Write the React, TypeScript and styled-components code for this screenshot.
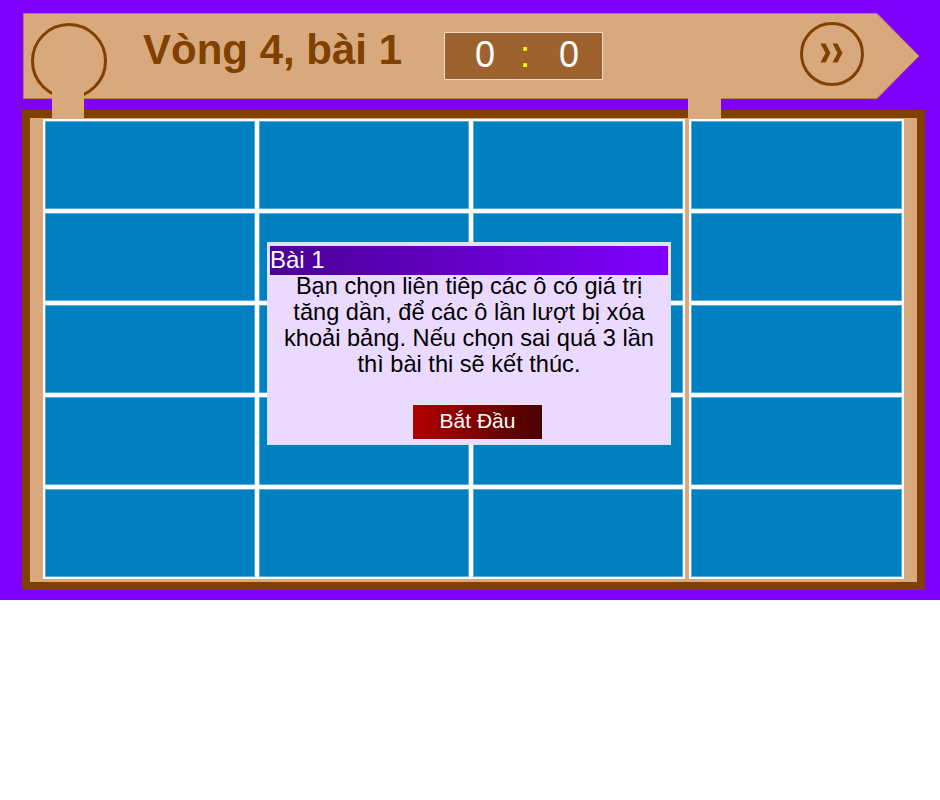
import React from "react";
import styled, { createGlobalStyle } from "styled-components";

const Global = createGlobalStyle`
  html, body { margin: 0; padding: 0; background: #ffffff; }
  body { font-family: "Liberation Sans", Arial, sans-serif; }
`;

const TAN = "#d9a97e";
const BROWN = "#804000";

const Stage = styled.div`
  width: 940px;
  height: 600px;
  background: #8000ff;
  box-sizing: border-box;
  padding: 13px 0 0 22px;
  display: flex;
  flex-direction: column;
`;

const Header = styled.header`
  position: relative;
  z-index: 2;
  margin-left: 1px;
  width: 897px;
  height: 86px;
  display: flex;
  align-items: flex-start;
`;

const HeaderShape = styled.svg`
  position: absolute;
  inset: 0;
  z-index: 0;
`;

const HomeRing = styled.div`
  position: relative;
  z-index: 1;
  margin: 10px 0 0 8px;
  width: 76px;
  height: 76px;
  box-sizing: border-box;
  border: 3px solid ${BROWN};
  border-radius: 50%;
  flex-shrink: 0;
`;

const Stem = styled.div<{ $left: number; $top: number; $w: number; $h: number }>`
  position: absolute;
  left: ${(p) => p.$left}px;
  top: ${(p) => p.$top}px;
  width: ${(p) => p.$w}px;
  height: ${(p) => p.$h}px;
  background: ${TAN};
  z-index: 3;
`;

const Title = styled.h1`
  position: relative;
  z-index: 1;
  margin: 13px 0 0 36px;
  font-family: "Liberation Sans", Arial, sans-serif;
  font-weight: bold;
  font-size: 42px;
  line-height: 48px;
  color: ${BROWN};
  white-space: nowrap;
`;

const Score = styled.div`
  position: relative;
  z-index: 1;
  margin: 19px 0 0 42px;
  width: 159px;
  height: 48px;
  box-sizing: border-box;
  border: 1px solid #ecdccb;
  background: #9d622e;
  display: flex;
  align-items: center;
  padding: 0 0 3px 30px;
  font-family: "Liberation Sans", Arial, sans-serif;
  font-size: 36px;
  line-height: 1;
`;

const ScorePart = styled.span<{ $gap: number; $colon?: boolean }>`
  margin-left: ${(p) => p.$gap}px;
  color: ${(p) => (p.$colon ? "#ffff00" : "#ffffff")};
`;

const NextButton = styled.button`
  position: relative;
  z-index: 1;
  margin: 9px 56px 0 auto;
  width: 64px;
  height: 64px;
  box-sizing: border-box;
  border: 3px solid ${BROWN};
  border-radius: 50%;
  background: transparent;
  padding: 0 0 2px 0;
  display: flex;
  align-items: center;
  justify-content: center;
  cursor: pointer;
`;

const Board = styled.main`
  position: relative;
  z-index: 1;
  margin-top: 11px;
  width: 903px;
  height: 480px;
  box-sizing: border-box;
  border: 8px solid ${BROWN};
  background: ${TAN};
  padding: 1px 13px 3px 13px;
  display: flex;
  gap: 4px;
`;

const TileGrid = styled.div<{ $cols: number; $w: number }>`
  display: grid;
  grid-template-columns: repeat(${(p) => p.$cols}, ${(p) => p.$w}px);
  grid-auto-rows: 92px;
`;

const Tile = styled.div`
  box-sizing: border-box;
  border: 2px solid #ffffff;
  background: #0080c0;
  box-shadow: inset 0 0 0 1px #58acdc;
`;

const Dialog = styled.section`
  position: absolute;
  left: 237px;
  top: 124px;
  width: 404px;
  height: 203px;
  box-sizing: border-box;
  border: 1px solid #d5e2f2;
  background: #eadaff;
  padding: 2px 1px 0 1px;
  display: flex;
  flex-direction: column;
  align-items: center;
`;

const DialogHead = styled.h2`
  position: relative;
  z-index: 1;
  align-self: stretch;
  margin: 0;
  height: 31px;
  box-sizing: border-box;
  border: 1px solid #eadaff;
  background: linear-gradient(to right, #4a0094, #8000ff);
  color: #ffffff;
  font-family: "Liberation Sans", Arial, sans-serif;
  font-weight: normal;
  font-size: 24px;
  line-height: 28px;
  padding: 0;
`;

const DialogText = styled.p`
  margin: -3px 0 0 0;
  padding: 0 8px;
  text-align: center;
  color: #000000;
  font-family: "Liberation Sans", Arial, sans-serif;
  font-size: 23.6px;
  line-height: 26px;
`;

const StartButton = styled.button`
  margin: 27px 0 0 17px;
  width: 131px;
  height: 36px;
  box-sizing: border-box;
  border: 1px solid #f4e6f4;
  background: linear-gradient(to right, #b00000, #4a0000);
  color: #ffffff;
  font-family: "Liberation Sans", Arial, sans-serif;
  font-size: 21px;
  padding: 0 0 3px 0;
  cursor: pointer;
`;

export default function App() {
  const left = Array.from({ length: 15 });
  const right = Array.from({ length: 5 });
  return (
    <>
      <Global />
      <Stage>
        <Header>
          <HeaderShape width="897" height="86" viewBox="0 0 897 86">
            <polygon
              points="0.5,0.5 854,0.5 896,43 854,85.5 0.5,85.5"
              fill={TAN}
              stroke="#b0804e"
              strokeWidth="1"
            />
          </HeaderShape>
          <HomeRing>
            <Stem $left={18} $top={63} $w={32} $h={30} />
          </HomeRing>
          <Title>Vòng 4, bài 1</Title>
          <Score>
            <ScorePart $gap={0}>0</ScorePart>
            <ScorePart $gap={25} $colon>:</ScorePart>
            <ScorePart $gap={29}>0</ScorePart>
          </Score>
          <NextButton aria-label="next">
            <svg width="24" height="20" viewBox="0 0 24 20">
              <path d="M0.5 0.5 H5.5 L10.5 10 L5.5 19.5 H0.5 L5.5 10 Z" fill={BROWN} />
              <path d="M12.5 0.5 H17.5 L22.5 10 L17.5 19.5 H12.5 L17.5 10 Z" fill={BROWN} />
            </svg>
          </NextButton>
          <Stem $left={665} $top={85} $w={33} $h={20} />
        </Header>
        <Board>
          <TileGrid $cols={3} $w={214}>
            {left.map((_, i) => (
              <Tile key={i} />
            ))}
          </TileGrid>
          <TileGrid $cols={1} $w={215}>
            {right.map((_, i) => (
              <Tile key={i} />
            ))}
          </TileGrid>
          <Dialog>
            <DialogHead>Bài 1</DialogHead>
            <DialogText>
              Bạn chọn liên tiêp các ô có giá trị tăng dần, để các ô lần lượt bị xóa khoải bảng. Nếu chọn sai quá 3 lần thì bài thi sẽ kết thúc.
            </DialogText>
            <StartButton>Bắt Đầu</StartButton>
          </Dialog>
        </Board>
      </Stage>
    </>
  );
}
